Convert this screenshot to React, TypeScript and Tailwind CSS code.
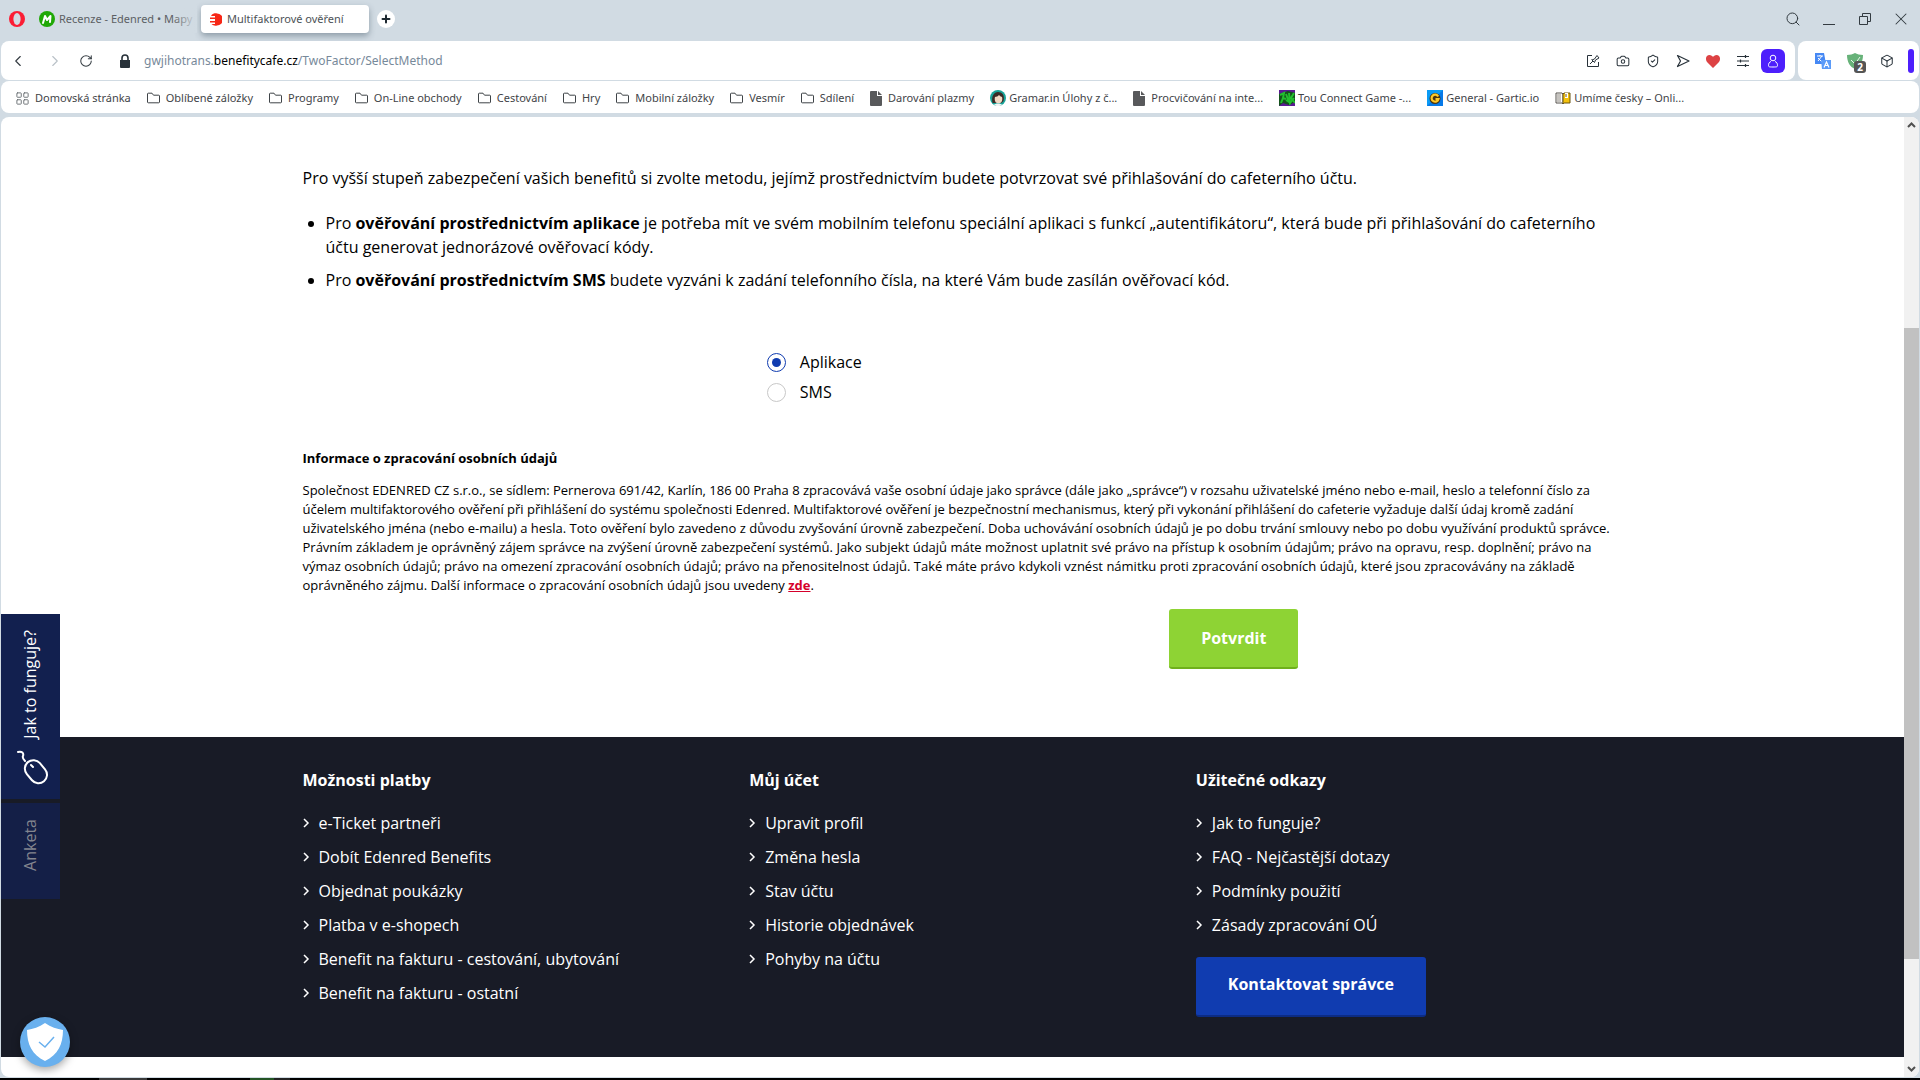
import { ReactNode, useState } from 'react';
import {
  Box,
  Camera,
  ChevronLeft,
  ChevronRight,
  LayoutGrid,
  Plus,
  RotateCw,
  Search,
  ShieldCheck,
  X,
} from 'lucide-react';

const FOLDERS = [
  'Oblíbené záložky',
  'Programy',
  'On-Line obchody',
  'Cestování',
  'Hry',
  'Mobilní záložky',
  'Vesmír',
  'Sdílení',
];

const METHODS = [
  { id: 'app', label: 'Aplikace' },
  { id: 'sms', label: 'SMS' },
];

const FOOTER_COLUMNS = [
  {
    title: 'Možnosti platby',
    links: [
      'e-Ticket partneři',
      'Dobít Edenred Benefits',
      'Objednat poukázky',
      'Platba v e-shopech',
      'Benefit na fakturu - cestování, ubytování',
      'Benefit na fakturu - ostatní',
    ],
  },
  {
    title: 'Můj účet',
    links: [
      'Upravit profil',
      'Změna hesla',
      'Stav účtu',
      'Historie objednávek',
      'Pohyby na účtu',
    ],
  },
  {
    title: 'Užitečné odkazy',
    links: [
      'Jak to funguje?',
      'FAQ - Nejčastější dotazy',
      'Podmínky použití',
      'Zásady zpracování OÚ',
    ],
    action: 'Kontaktovat správce',
  },
];

const FolderIcon = () => (
  <svg className="h-3 w-[13px] shrink-0" viewBox="0 0 13 12" fill="none" stroke="currentColor">
    <path d="M0.500 10V2a.8.8 0 0 1 .8-.8H5l1.500 2h5.200a.8.8 0 0 1 .8.8v6a.8.8 0 0 1-.8.8H1.300a.8.8 0 0 1-.8-.8z" />
  </svg>
);

const PageIcon = () => (
  <svg className="mr-[3px] h-[15px] w-3 shrink-0" viewBox="0 0 12 15" fill="#58595b">
    <path d="M1 0h6v5h5v9a1 1 0 0 1-1 1H1a1 1 0 0 1-1-1V1a1 1 0 0 1 1-1z" />
    <path d="M8 0l4 4H8z" />
  </svg>
);

const AvatarIcon = () => (
  <svg className="size-4 shrink-0" viewBox="0 0 16 16">
    <circle cx="8" cy="8" r="8" fill="#17a398" />
    <path d="M2.500 13C1 6 4 2 8 2s7 3 5.500 9l-2 2H5z" fill="#3b2a25" />
    <ellipse cx="8.500" cy="9" rx="3.800" ry="4.200" fill="#f3d9c4" />
    <path d="M4 7c3 0 4-1 5-2 1 1 2 2 4 2l-1-3-4-1-3 1z" fill="#3b2a25" />
    <path d="M4 15c1-2 7-2 8 0a8 8 0 0 1-8 0z" fill="#f4f4f4" />
  </svg>
);

const ConnectIcon = () => (
  <svg className="size-4 shrink-0" viewBox="0 0 16 16">
    <rect width="16" height="16" fill="#14521b" />
    <path d="M0 0h16v3L9 1 0 4zM0 16l4-3 6 2 6-3v4z" fill="#5a1a92" />
    <path
      d="M1 5l4-2-1 5 3 1M2 13l2-5M7 4l3 8-3-2M10 3l1 10 4-5M15 3l-3 5 4 5"
      fill="none"
      stroke="#22c02e"
      strokeWidth="2"
    />
  </svg>
);

const GarticIcon = () => (
  <svg className="size-4 shrink-0" viewBox="0 0 16 16">
    <rect width="16" height="16" fill="#0a9bf5" />
    <path d="M0 16L16 0v16z" fill="#0679e8" />
    <circle cx="8" cy="8.500" r="4" fill="#4a3410" stroke="#4a3410" strokeWidth="3" />
    <path d="M11.200 6.500A3.500 3.500 0 1 0 11.500 9H8.500" fill="none" stroke="#ffc928" strokeWidth="2.200" />
  </svg>
);

const BookIcon = () => (
  <svg className="size-4 shrink-0" viewBox="0 0 16 16">
    <path d="M1 3h6l1 1v10l-1-1H1z" fill="#fff" stroke="#55504a" />
    <path d="M2 5h4M2 7h4M2 9h4M2 11h4" stroke="#8c877f" />
    <path d="M8 4l1-1h6v10H9l-1 1z" fill="#f4c20d" stroke="#6b5512" />
    <path d="M10 3h3v5h-3z" fill="#fff" />
    <path d="M11 4v3" stroke="#6b5512" />
  </svg>
);

const SITES: { label: string; icon: ReactNode }[] = [
  { label: 'Darování plazmy', icon: <PageIcon /> },
  { label: 'Gramar.in Úlohy z č...', icon: <AvatarIcon /> },
  { label: 'Procvičování na inte...', icon: <PageIcon /> },
  { label: 'Tou Connect Game -...', icon: <ConnectIcon /> },
  { label: 'General - Gartic.io', icon: <GarticIcon /> },
  { label: 'Umíme česky – Onli...', icon: <BookIcon /> },
];

const TabStrip = () => (
  <header className="flex h-[41px] shrink-0 items-start pl-2 pr-px pt-[5px]">
    <button aria-label="Opera" className="flex h-7 w-[31px] items-center">
      <svg className="size-[18px]" viewBox="0 0 18 18">
        <ellipse cx="9" cy="9" rx="8" ry="8" fill="#fb1d34" />
        <ellipse cx="9" cy="9" rx="3.600" ry="6" fill="#d1dbe3" />
      </svg>
    </button>
    <div className="relative flex h-7 w-[158px] items-center gap-1 overflow-hidden">
      <svg className="size-4 shrink-0" viewBox="0 0 16 16">
        <circle cx="8" cy="8" r="8" fill="#1fa806" />
        <path
          d="M4 12l2-7 2 4 3.500-4L11 11"
          fill="none"
          stroke="#fff"
          strokeWidth="2"
          strokeLinecap="round"
          strokeLinejoin="round"
        />
      </svg>
      <span className="whitespace-nowrap text-[#5c6064]">Recenze - Edenred • Mapy</span>
      <span className="absolute right-0 top-0 h-7 w-6 bg-linear-to-r from-[#d1dbe3]/0 to-[#d1dbe3]" />
    </div>
    <div className="ml-1 flex h-7 w-[168px] items-center gap-[5px] rounded bg-white px-[9px] text-[#4d5256] shadow-[0_3px_6px_rgba(60,80,95,0.45)]">
      <svg className="h-[13px] w-3 shrink-0" viewBox="0 0 12 13">
        <path d="M2 1.500C4 0 6 0 7 .5a6 6 0 0 1 0 12C5 13 3 12.500 1.500 11H5V9.500H0V8h5V6H0V4.500h5V3H1z" fill="#f72717" />
      </svg>
      <span className="whitespace-nowrap">Multifaktorové ověření</span>
    </div>
    <button
      aria-label="Nová karta"
      className="ml-2 mt-[5px] flex size-[18px] items-center justify-center rounded-full bg-white text-[#1d2830]"
    >
      <Plus size={12} strokeWidth={4} />
    </button>
    <div className="ml-auto flex h-7 items-center text-[#333b41]">
      <button aria-label="Hledat" className="flex w-9 justify-center">
        <Search size={16} strokeWidth={1.5} />
      </button>
      <button aria-label="Minimalizovat" className="flex h-3 w-9 items-end justify-center">
        <span className="h-px w-3 bg-[#333b41]" />
      </button>
      <button aria-label="Obnovit okno" className="flex w-9 justify-center">
        <svg className="size-[14px]" viewBox="0 0 14 14" fill="none" stroke="currentColor">
          <path d="M1.500 4.500h8v8h-8zM4.500 4V1.500h8v8H10" />
        </svg>
      </button>
      <button aria-label="Zavřít" className="flex w-9 justify-center">
        <X size={20} strokeWidth={1.25} />
      </button>
    </div>
  </header>
);

const TuneIcon = () => (
  <svg className="size-[14px]" viewBox="0 0 14 14" fill="none" stroke="currentColor">
    <path d="M1 2.500h12M1 7h12M1 11.500h12M9.500 1v3M4.500 5.500v3M9.500 10v3" strokeWidth="1.200" />
  </svg>
);

const EditIcon = () => (
  <svg className="size-[14px]" viewBox="0 0 14 14" fill="none" stroke="currentColor">
    <path d="M6 1.500H1.500v11h11V8" />
    <path d="M4 10l3-3M5.500 5.500l3 3M6 6l2.500-1L11 1.500 13 4 9.500 6l-1 2.500" />
  </svg>
);

const SendIcon = () => (
  <svg className="size-[14px]" viewBox="0 0 14 14" fill="none" stroke="currentColor" strokeLinejoin="round">
    <path d="M1.500 1.500L13 7 1.500 12.500 4.500 7z" strokeWidth="1.200" />
  </svg>
);

const AddressBar = () => (
  <div className="flex h-[39px] shrink-0 gap-[3px] px-px">
    <div className="flex min-w-0 flex-1 items-center rounded-lg bg-white pl-2 pr-[10px]">
      <button aria-label="Zpět" className="flex w-[37px] text-[#333b41]">
        <ChevronLeft size={18} strokeWidth={1.5} />
      </button>
      <button aria-label="Vpřed" className="flex w-[33px] text-[#b9c1c7]">
        <ChevronRight size={18} strokeWidth={1.5} />
      </button>
      <button aria-label="Obnovit" className="flex w-[41px] text-[#333b41]">
        <RotateCw size={14} strokeWidth={1.75} />
      </button>
      <svg className="h-[14px] w-[10px]" viewBox="0 0 10 14" fill="#28323a">
        <path d="M0 6h10v7a1 1 0 0 1-1 1H1a1 1 0 0 1-1-1z" />
        <path d="M2 6V4a3 3 0 0 1 6 0v2" fill="none" stroke="#28323a" strokeWidth="1.600" />
      </svg>
      <div
        role="textbox"
        aria-label="Adresa"
        className="ml-[14px] flex-1 whitespace-nowrap text-[12px] text-[#77899a]"
      >
        gwjihotrans.<span className="text-black">benefitycafe.cz</span>/TwoFactor/SelectMethod
      </div>
      <div className="flex items-center gap-4 text-[#28323a]">
        <button aria-label="Upravit">
          <EditIcon />
        </button>
        <button aria-label="Snímek">
          <Camera size={14} strokeWidth={1.75} />
        </button>
        <button aria-label="Ochrana">
          <ShieldCheck size={14} strokeWidth={1.75} />
        </button>
        <button aria-label="Odeslat">
          <SendIcon />
        </button>
        <button aria-label="Oblíbené">
          <svg className="h-[14px] w-[14px]" viewBox="0 0 14 14" fill="#dd4244">
            <path d="M7 14L1 8C-1 5 0 1 3.500 1 5 1 6.500 2 7 3c.5-1 2-2 3.500-2C14 1 15 5 13 8z" />
          </svg>
        </button>
        <button aria-label="Nastavení">
          <TuneIcon />
        </button>
        <button
          aria-label="Profil"
          className="-ml-[5px] flex size-6 items-center justify-center rounded-md bg-[#4d1ffc]"
        >
          <svg className="h-[14px] w-3" viewBox="0 0 12 14" fill="none" stroke="#fff">
            <circle cx="6" cy="4" r="2.800" />
            <path d="M4 7.500C2 8 1.500 10 1.500 11.500s1 1.500 4.500 1.500 4.500 0 4.500-1.500S10 8 8 7.500" />
          </svg>
        </button>
      </div>
    </div>
    <div className="flex w-[121px] items-center rounded-lg bg-white pl-[17px] pr-[5px]">
      <button aria-label="Překladač" className="mr-4">
        <svg className="size-4" viewBox="0 0 16 16">
          <path d="M0 0h9l2 11H0z" fill="#4688f4" />
          <path d="M2 3h6M5 2v1M3 8l4-5M3 5l4 4" stroke="#fff" fill="none" />
          <path d="M6 7h10v9H7z" fill="#5b9bf8" />
          <path d="M9 14.500L11.500 9l2.500 5.500M10 12.500h3" stroke="#fff" strokeWidth="1.200" fill="none" />
        </svg>
      </button>
      <button aria-label="Blokování, 2 položky" className="relative mr-[14px] h-5 w-[19px]">
        <svg className="h-4 w-4" viewBox="0 0 16 16">
          <path d="M0 2c3 0 6-1 8-2 2 1 5 2 8 2 0 7-3 12-8 14C3 14 0 9 0 2z" fill="#67b279" />
          <path d="M4 7l4 4 5-7" stroke="#e9f5ec" fill="none" />
        </svg>
        <span className="absolute bottom-[-2px] right-0 flex size-3 items-center justify-center rounded-[3px] bg-[#555] text-[10px] font-bold leading-none text-white">
          2
        </span>
      </button>
      <button aria-label="Rozšíření" className="text-[#28323a]">
        <Box size={14} strokeWidth={1.75} />
      </button>
      <span className="ml-auto h-6 w-[6px] rounded-full bg-[#4d1ffc]" />
    </div>
  </div>
);

const BookmarksBar = () => (
  <nav className="mx-px mt-px flex h-8 shrink-0 items-center gap-4 rounded-lg bg-white pl-[14px] pt-[2px] text-[#3f4448]">
    <a href="#" className="flex items-center gap-[5px] whitespace-nowrap">
      <LayoutGrid size={15} strokeWidth={1.5} className="text-[#6a6f73]" />
      Domovská stránka
    </a>
    {FOLDERS.map((name) => (
      <a href="#" key={name} className="flex items-center gap-[6px] whitespace-nowrap">
        <FolderIcon />
        {name}
      </a>
    ))}
    {SITES.map((site) => (
      <a href="#" key={site.label} className="flex items-center gap-[3px] whitespace-nowrap">
        {site.icon}
        {site.label}
      </a>
    ))}
  </nav>
);

const MethodForm = () => {
  const [method, setMethod] = useState('app');

  return (
    <form className="mx-auto max-w-[1300px] pt-[49px]" onSubmit={(e) => e.preventDefault()}>
      <p>
        Pro vyšší stupeň zabezpečení vašich benefitů si zvolte metodu, jejímž prostřednictvím
        budete potvrzovat své přihlašování do cafeterního účtu.
      </p>
      <ul className="mt-[21px] flex list-disc flex-col gap-[9px] pl-[23px]">
        <li>
          Pro <b>ověřování prostřednictvím aplikace</b> je potřeba mít ve svém mobilním telefonu
          speciální aplikaci s funkcí „autentifikátoru“, která bude při přihlašování do
          cafeterního účtu generovat jednorázové ověřovací kódy.
        </li>
        <li>
          Pro <b>ověřování prostřednictvím SMS</b> budete vyzváni k zadání telefonního čísla, na
          které Vám bude zasílán ověřovací kód.
        </li>
      </ul>
      <div className="mt-[58px] grid grid-cols-3">
        <div className="col-start-2 flex flex-col gap-[6px] pl-[31px]">
          {METHODS.map(({ id, label }) => (
            <label key={id} className="flex items-center gap-[14px]">
              <input
                type="radio"
                name="method"
                checked={method === id}
                onChange={() => setMethod(id)}
                className="size-[19px] appearance-none rounded-full border border-[#c8c8c8] bg-clip-content p-1 checked:border-[#103cb0] checked:bg-[#103cb0]"
              />
              {label}
            </label>
          ))}
        </div>
      </div>
      <div className="-mr-3 mt-[45px] text-[13px] leading-[19px]">
        <h2 className="font-bold">Informace o zpracování osobních údajů</h2>
        <p className="mt-[13px]">
          Společnost EDENRED CZ s.r.o., se sídlem: Pernerova 691/42, Karlín, 186 00 Praha 8
          zpracovává vaše osobní údaje jako správce (dále jako „správce“) v rozsahu uživatelské
          jméno nebo e-mail, heslo a telefonní číslo za účelem multifaktorového ověření při
          přihlášení do systému společnosti Edenred. Multifaktorové ověření je bezpečnostní
          mechanismus, který při vykonání přihlášení do cafeterie vyžaduje další údaj kromě zadání
          uživatelského jména (nebo e-mailu) a hesla. Toto ověření bylo zavedeno z důvodu zvyšování
          úrovně zabezpečení. Doba uchovávání osobních údajů je po dobu trvání smlouvy nebo po dobu
          využívání produktů správce. Právním základem je oprávněný zájem správce na zvýšení úrovně
          zabezpečení systémů. Jako subjekt údajů máte možnost uplatnit své právo na přístup k
          osobním údajům; právo na opravu, resp. doplnění; právo na výmaz osobních údajů; právo na
          omezení zpracování osobních údajů; právo na přenositelnost údajů. Také máte právo kdykoli
          vznést námitku proti zpracování osobních údajů, které jsou zpracovávány na základě
          oprávněného zájmu. Další informace o zpracování osobních údajů jsou uvedeny{' '}
          <a href="#" className="font-bold text-[#d5002b] underline">
            zde
          </a>
          .
        </p>
      </div>
      <div className="mt-[14px] grid grid-cols-3 pb-[68px]">
        <button
          type="submit"
          className="col-start-3 h-[60px] justify-self-start rounded-[3px] border-b-2 border-[#6fb01c] bg-[#8ed334] px-8 font-bold text-white"
        >
          Potvrdit
        </button>
      </div>
    </form>
  );
};

const Footer = () => (
  <footer className="bg-[#181b26] pb-10 pt-[31px] text-white">
    <div className="mx-auto grid max-w-[1300px] grid-cols-3 gap-10">
      {FOOTER_COLUMNS.map((column) => (
        <section key={column.title}>
          <h3 className="font-bold">{column.title}</h3>
          <ul className="mt-[14px] leading-[34px]">
            {column.links.map((link) => (
              <li key={link}>
                <a href="#" className="flex items-center gap-[9px]">
                  <svg className="h-[10px] w-[7px]" viewBox="0 0 7 10" fill="none" stroke="#fff">
                    <path d="M1 1l4 4-4 4" strokeWidth="1.500" />
                  </svg>
                  {link}
                </a>
              </li>
            ))}
          </ul>
          {column.action && (
            <button className="mt-[15px] h-[60px] rounded-[3px] border-b-2 border-[#0c2c84] bg-[#103cb0] px-8 pb-1 font-bold">
              {column.action}
            </button>
          )}
        </section>
      ))}
    </div>
  </footer>
);

const SideTabs = () => (
  <div className="absolute left-0 top-[497px] flex w-[59px] flex-col gap-1">
    <button className="flex h-[185px] flex-col items-center bg-[#12204f] pr-[2px] pt-4 text-white">
      <span className="rotate-180 [writing-mode:vertical-rl]">Jak to funguje?</span>
      <svg
        className="ml-1 mt-[11px] h-[36px] w-[34px]"
        viewBox="0 0 34 36"
        fill="none"
        stroke="#fff"
        strokeWidth="2"
        strokeLinecap="round"
      >
        <rect x="12" y="9" width="17" height="25" rx="8.500" transform="rotate(-40 21 21)" />
        <path d="M3 2c4-1 6 1 5 4-1 2 0 3 2 5M16 15l2 2" />
      </svg>
    </button>
    <button className="flex h-24 flex-col items-center bg-[#141f47] pr-[2px] pt-4 text-[#84868f]">
      <span className="rotate-180 [writing-mode:vertical-rl]">Anketa</span>
    </button>
  </div>
);

const ConsentButton = () => (
  <button
    aria-label="Nastavení soukromí"
    className="absolute bottom-[10px] left-[19px] flex size-[50px] items-center justify-center rounded-full bg-[#69b0ee] shadow-[0_3px_8px_rgba(0,0,0,0.35)]"
  >
    <svg className="h-[38px] w-9" viewBox="0 0 36 38">
      <path d="M18 0c6 4 12 6 18 7 0 14-5 25-18 31C5 32 0 21 0 7c6-1 12-3 18-7z" fill="#fff" />
      <path d="M12 19l6 5 9-10" fill="none" stroke="#69b0ee" strokeWidth="1.500" />
    </svg>
  </button>
);

const Scrollbar = () => (
  <div className="flex w-[15px] shrink-0 flex-col items-center bg-[#f1f1f1] text-[#505050]">
    <svg className="my-1 h-2 w-[9px]" viewBox="0 0 9 8" fill="none" stroke="currentColor">
      <path d="M1 6l3.500-3.500L8 6" strokeWidth="2" />
    </svg>
    <div className="flex w-full flex-1 flex-col">
      <div className="flex-[195]" />
      <div className="flex-[631] bg-[#c1c1c1]" />
      <div className="flex-[102]" />
    </div>
    <svg className="my-1 h-2 w-[9px]" viewBox="0 0 9 8" fill="none" stroke="currentColor">
      <path d="M1 2l3.500 3.500L8 2" strokeWidth="2" />
    </svg>
  </div>
);

export default function App() {
  return (
    <div className="flex h-screen flex-col overflow-hidden bg-[#d1dbe3] font-['Noto_Sans','Open_Sans',sans-serif] text-[11px]">
      <TabStrip />
      <AddressBar />
      <BookmarksBar />
      <div className="relative mx-px mb-px mt-1 flex min-h-0 flex-1 overflow-hidden rounded-lg bg-white font-['Open_Sans','Noto_Sans',sans-serif] text-[16px] leading-6 text-black">
        <main className="min-w-0 flex-1">
          <MethodForm />
          <Footer />
        </main>
        <Scrollbar />
        <SideTabs />
        <ConsentButton />
      </div>
      <div className="flex h-[2px] shrink-0 bg-black">
        <span className="ml-[99px] w-12 bg-[#3a3a3a]" />
        <span className="ml-[103px] w-6 bg-[#245424]" />
        <span className="w-4 bg-[#222]" />
      </div>
    </div>
  );
}
